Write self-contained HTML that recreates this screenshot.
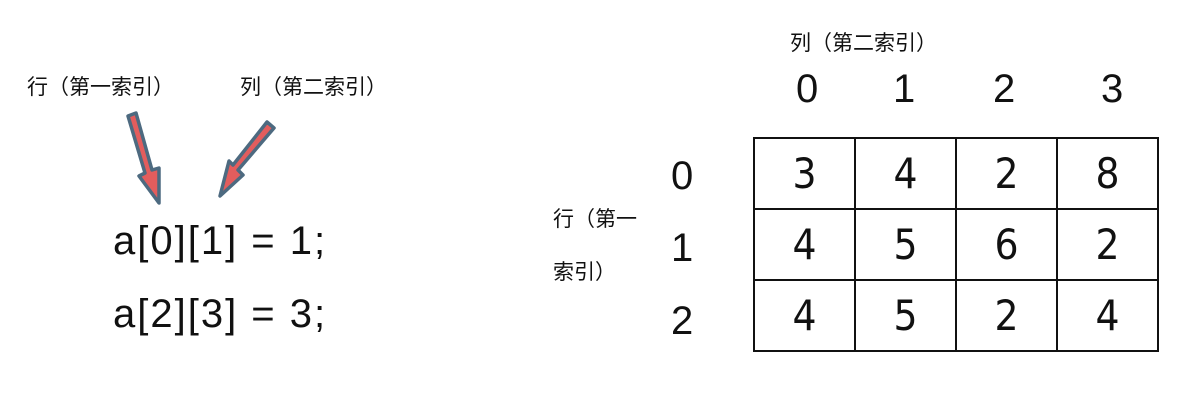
<!DOCTYPE html>
<html><head><meta charset="utf-8"><style>
body{margin:0;width:1196px;height:402px;background:#fff;position:relative;overflow:hidden;font-family:"Liberation Sans","Noto Sans CJK SC",sans-serif;color:#111}
.t{position:absolute;white-space:nowrap;line-height:1}
.cj{font-size:21px}
.big{font-size:40px}
.code{font-size:40px;letter-spacing:2px}
table{position:absolute;left:753px;top:137px;border-collapse:collapse}
td{border:2px solid #111;width:99px;height:69px;text-align:center;font-size:42px;font-family:"DejaVu Sans Condensed","Liberation Sans Narrow",sans-serif;padding:0}
</style></head><body>
<div class="t cj" style="left:27px;top:77px">行（第一索引）</div>
<div class="t cj" style="left:240px;top:77px">列（第二索引）</div>
<svg style="position:absolute;left:0;top:0" width="400" height="220">
<polygon points="128,116 136,113 152,170 159,168 159,203 139,176 145,173" fill="#e35d5d" stroke="#4d6a80" stroke-width="3.5" stroke-linejoin="round"/>
<polygon points="267,122 274,128 238,170 243,175 220,196 229,161 233,165" fill="#e35d5d" stroke="#4d6a80" stroke-width="3.5" stroke-linejoin="round"/>
</svg>
<div class="t code" style="left:113px;top:221px">a[0][1] = 1;</div>
<div class="t code" style="left:113px;top:294px">a[2][3] = 3;</div>
<div class="t cj" style="left:790px;top:33px">列（第二索引）</div>
<div class="t big" style="left:796px;top:69px">0</div>
<div class="t big" style="left:893px;top:69px">1</div>
<div class="t big" style="left:993px;top:69px">2</div>
<div class="t big" style="left:1101px;top:69px">3</div>
<div class="t big" style="left:671px;top:156px">0</div>
<div class="t big" style="left:671px;top:228px">1</div>
<div class="t big" style="left:671px;top:301px">2</div>
<div class="t cj" style="left:553px;top:209px">行（第一</div>
<div class="t cj" style="left:553px;top:262px">索引）</div>
<table>
<tr><td>3</td><td>4</td><td>2</td><td>8</td></tr>
<tr><td>4</td><td>5</td><td>6</td><td>2</td></tr>
<tr><td>4</td><td>5</td><td>2</td><td>4</td></tr>
</table>
</body></html>
